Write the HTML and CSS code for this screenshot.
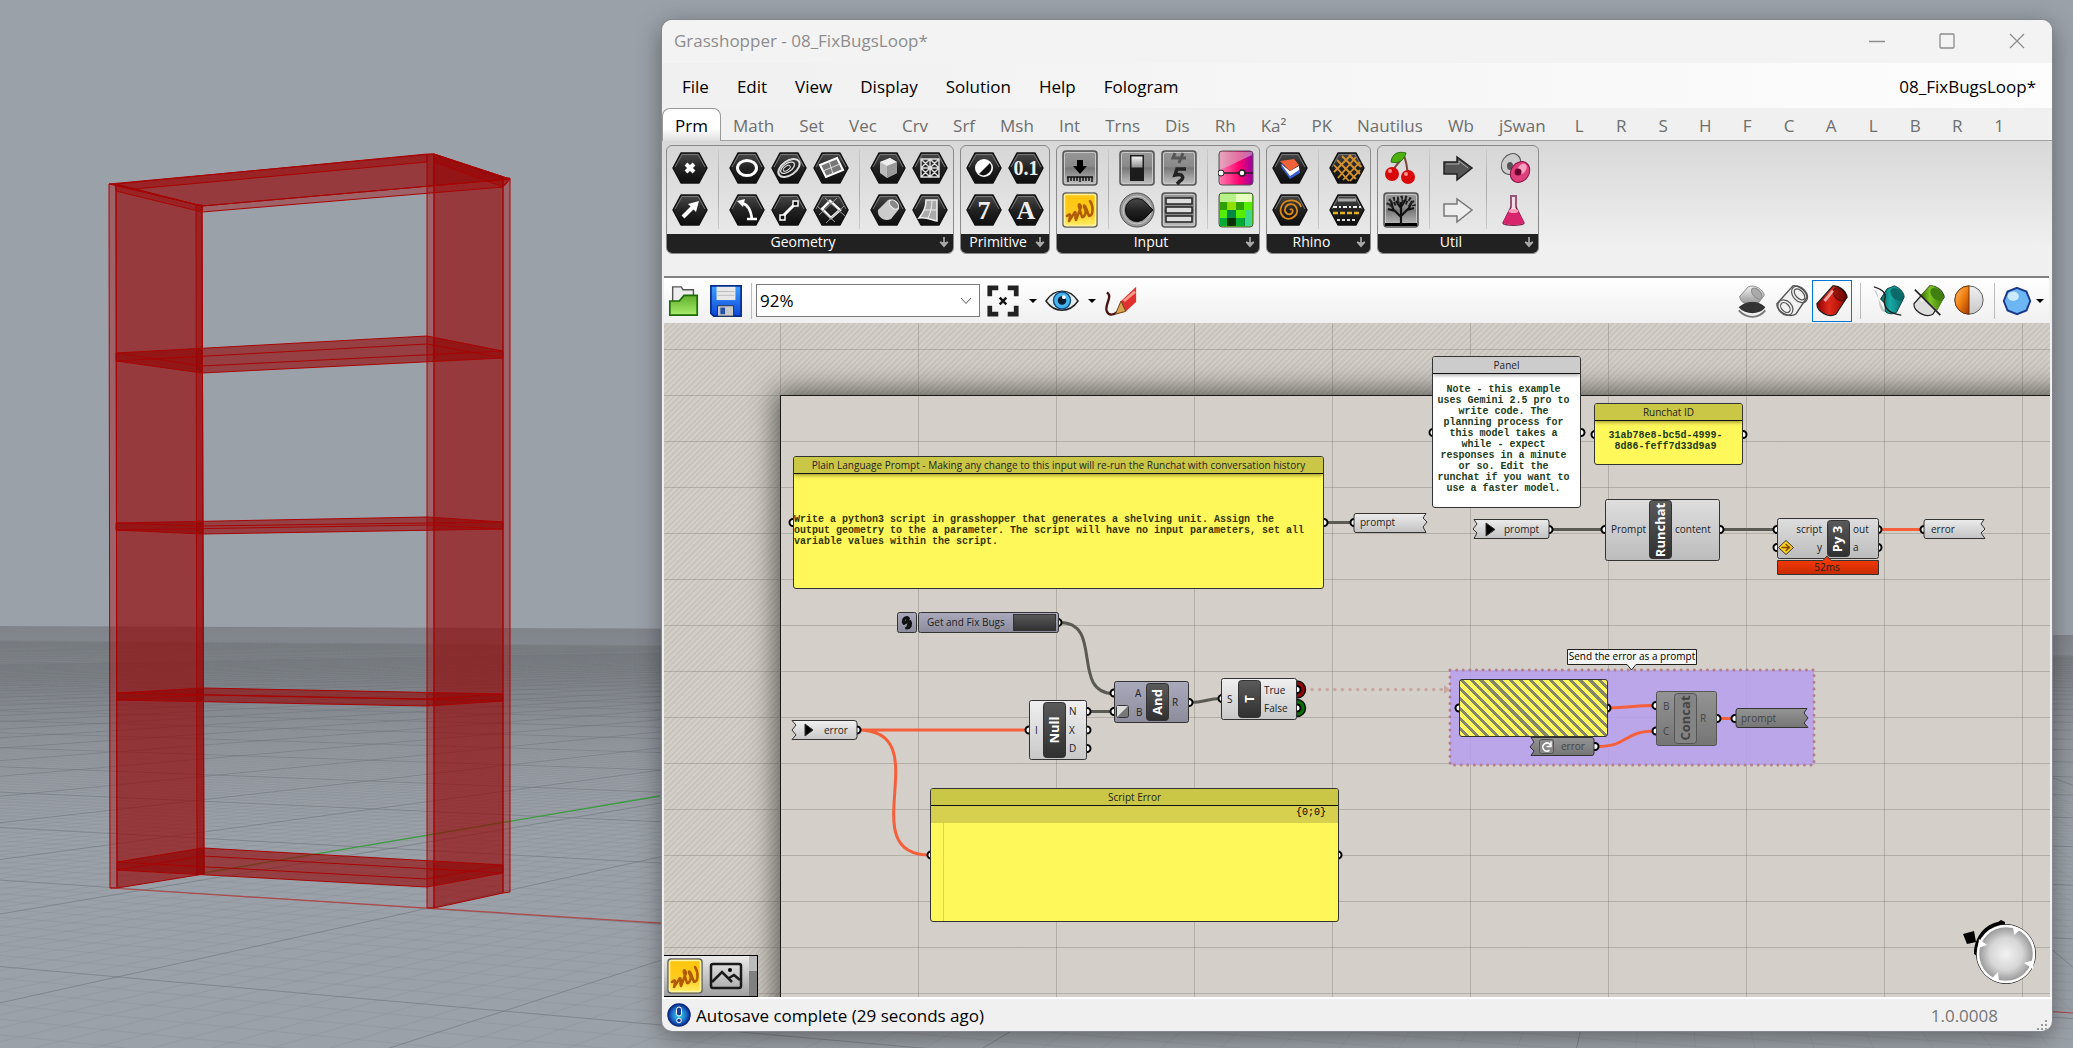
FILE: index.html
```html
<!DOCTYPE html>
<html lang="en">
<head>
<meta charset="utf-8">
<title>Grasshopper - 08_FixBugsLoop*</title>
<link rel="stylesheet" href="styles.css">
</head>
<body>
<div class="desktop">
<svg class="viewport" aria-hidden="true">
  <defs>
    <linearGradient id="ground" x1="0" y1="0" x2="0" y2="1">
      <stop offset="0" stop-color="#7f838a"/><stop offset=".08" stop-color="#868b92"/><stop offset=".25" stop-color="#959aa2"/><stop offset=".5" stop-color="#9ba1a9"/><stop offset="1" stop-color="#9ba1a8"/>
    </linearGradient>
    <clipPath id="groundClip"><polygon points="0,627 4000,643 4000,3000 0,3000"/></clipPath>
  </defs>
  <polygon points="0,626 4000,642 4000,1048 0,1048" fill="url(#ground)"/>
  <g id="grid" clip-path="url(#groundClip)"></g>
  <path d="M203 873L660 796" stroke="#3f9b45" stroke-width="1.3" fill="none"/>
  <path d="M110 888L2073 1013" stroke="#b04848" stroke-width="1.2" fill="none"/>
  <g class="shelf">
    <path class="face" d="M116 184L202 206L204 874L117 888Z"/>
    <path class="face" d="M434 154L503 178L503 893L434 908Z"/>
    <path class="post" d="M109 184H116L117 888H110Z"/>
    <path class="post" d="M196 205H202L204 873L197 875Z"/>
    <path class="post" d="M427 154H434V908H427Z"/>
    <path class="post" d="M503 178H510V892L503 893Z"/>
    <path class="face" d="M109 184L434 154L510 179L202 206Z"/>
    <path class="post" d="M116 185L202 206V212L116 191Z M202 206L510 179L503 187L202 212Z M116 184L427 154V162L135 189"/>
    <path class="post" d="M434 154L510 179L503 187L434 162Z"/>
    <path class="board" d="M116 353L427 336L503 351V358L202 373L116 361Z"/>
    <path class="line" d="M116 353L202 366L503 351M116 361L427 344L503 358M202 348V373"/>
    <path class="board" d="M116 523L427 517L503 522V529L202 534L116 530Z"/>
    <path class="line" d="M116 523L202 526L503 522M116 530L427 525L503 529"/>
    <path class="board" d="M117 693L203 688L503 694V701L427 706L117 700Z"/>
    <path class="line" d="M117 693L427 699L503 694M117 700L203 695L503 701"/>
    <path class="board" d="M117 862L203 848L503 865V873L427 887L117 870Z"/>
    <path class="line" d="M117 862L427 879L503 865M117 870L203 856L503 873"/>
  </g>
</svg>

<svg class="defs" width="0" height="0" aria-hidden="true">
  <defs>
    <linearGradient id="dark" x1="0" y1="0" x2="0" y2="1"><stop offset="0" stop-color="#4a4a4a"/><stop offset=".5" stop-color="#222"/><stop offset="1" stop-color="#0e0e0e"/></linearGradient>
    <linearGradient id="tile" x1="0" y1="0" x2="0" y2="1"><stop offset="0" stop-color="#989898"/><stop offset=".45" stop-color="#8a8a8a"/><stop offset=".5" stop-color="#777"/><stop offset="1" stop-color="#c4c4c4"/></linearGradient>
    <linearGradient id="metal" x1="0" y1="0" x2="0" y2="1"><stop offset="0" stop-color="#f4f4f4"/><stop offset="1" stop-color="#8f8f8f"/></linearGradient>
    <linearGradient id="yellow" x1="0" y1="0" x2="0" y2="1"><stop offset="0" stop-color="#ffc40c"/><stop offset=".6" stop-color="#ffcb20"/><stop offset="1" stop-color="#fff06a"/></linearGradient>
    <linearGradient id="pink" x1="0" y1="0" x2="1" y2="0"><stop offset="0" stop-color="#ff7fae"/><stop offset=".6" stop-color="#ff0070"/><stop offset="1" stop-color="#9a00a0"/></linearGradient>
    <linearGradient id="blue" x1="0" y1="0" x2="0" y2="1"><stop offset="0" stop-color="#3ea0ff"/><stop offset="1" stop-color="#0a46d8"/></linearGradient>
    <linearGradient id="green" x1="0" y1="0" x2="0" y2="1"><stop offset="0" stop-color="#5fae2a"/><stop offset="1" stop-color="#a8ee6c"/></linearGradient>
    <linearGradient id="red" x1="0" y1="0" x2="1" y2="0"><stop offset="0" stop-color="#8e0000"/><stop offset=".4" stop-color="#e02a1c"/><stop offset="1" stop-color="#9c0500"/></linearGradient>
    <linearGradient id="teal" x1="0" y1="0" x2="1" y2="0"><stop offset="0" stop-color="#0a5a5a"/><stop offset=".4" stop-color="#18aaa6"/><stop offset="1" stop-color="#086a6a"/></linearGradient>
    <linearGradient id="lime" x1="0" y1="0" x2="1" y2="0"><stop offset="0" stop-color="#356a06"/><stop offset=".4" stop-color="#7cc424"/><stop offset="1" stop-color="#3a7808"/></linearGradient>
    <linearGradient id="orange" x1="0" y1="0" x2="1" y2="1"><stop offset="0" stop-color="#ffc070"/><stop offset=".5" stop-color="#f08010"/><stop offset="1" stop-color="#a03800"/></linearGradient>
    <linearGradient id="comp" x1="0" y1="0" x2="0" y2="1"><stop offset="0" stop-color="#dedede"/><stop offset="1" stop-color="#bcbcbc"/></linearGradient>
    <linearGradient id="param" x1="0" y1="0" x2="0" y2="1"><stop offset="0" stop-color="#ececec"/><stop offset="1" stop-color="#c2c2c2"/></linearGradient>
    <linearGradient id="light" x1="0" y1="0" x2="0" y2="1"><stop offset="0" stop-color="#f0f0f0"/><stop offset="1" stop-color="#c8c8c8"/></linearGradient>
    <linearGradient id="violet" x1="0" y1="0" x2="0" y2="1"><stop offset="0" stop-color="#aaaabd"/><stop offset="1" stop-color="#8c8c9c"/></linearGradient>
    <linearGradient id="off" x1="0" y1="0" x2="0" y2="1"><stop offset="0" stop-color="#949494"/><stop offset="1" stop-color="#757575"/></linearGradient>
    <linearGradient id="capsule" x1="0" y1="0" x2="0" y2="1"><stop offset="0" stop-color="#5a5a5a"/><stop offset="1" stop-color="#303030"/></linearGradient>
    <linearGradient id="time" x1="0" y1="0" x2="0" y2="1"><stop offset="0" stop-color="#ff3d08"/><stop offset="1" stop-color="#c62a02"/></linearGradient>
    <radialGradient id="ball"><stop offset="0" stop-color="#f2f2f2"/><stop offset=".55" stop-color="#d6d6d6"/><stop offset="1" stop-color="#8c8c8c"/></radialGradient>
    <radialGradient id="status"><stop offset="0" stop-color="#40e0f0"/><stop offset=".65" stop-color="#1c70c8"/><stop offset="1" stop-color="#0a2a90"/></radialGradient>
    <symbol id="hex" viewBox="0 0 36 36"><path d="M1 18L9 3H27L35 18L27 33H9Z" fill="url(#dark)" stroke="#111" stroke-width="1.5" stroke-linejoin="round"/><path d="M3 17L10 4.500H26L33 17" fill="none" stroke="#777" stroke-width="1"/></symbol>
    <symbol id="square" viewBox="0 0 36 36"><rect x="1" y="1" width="34" height="34" rx="3" fill="url(#tile)" stroke="#555" stroke-width="1.500"/><rect x="2.500" y="2.500" width="31" height="31" rx="2" fill="none" stroke="#c8c8c8"/></symbol>
    <symbol id="scribble" viewBox="0 0 36 36"><rect x="1" y="1" width="34" height="34" rx="3" fill="url(#yellow)" stroke="#666" stroke-width="1.500"/><rect x="2.500" y="2.500" width="31" height="31" rx="2" fill="none" stroke="#fff3a0" stroke-width="1.500"/><path d="M5 24C8 21 9 22 7 29L13 20C15 21 12 25 14 28L19 15C18 11 16 12 17 15L20 25C22 26 25 20 23 17C21 13 22 12 24 16L27 24C31 24 32 15 28 9" fill="none" stroke="#b05c00" stroke-width="2.500" stroke-linejoin="round" stroke-linecap="round"/></symbol>
    <symbol id="tube" viewBox="0 0 36 36"><path d="M19 2C25 1 33 7 34 14L22 32C15 36 2 30 2 21Z" stroke="#222" stroke-width="1.300"/><ellipse cx="26" cy="11" rx="5.500" ry="8" transform="rotate(-43 26 11)" fill="#0004" stroke="#0007"/><path d="M10 18L19 7" stroke="#fff9" stroke-width="3"/></symbol>
    <symbol id="down" viewBox="0 0 12 14"><path d="M6 1V12M1.500 7L6 12L10.500 7L6 9Z" fill="#aaa" stroke="#aaa" stroke-width="2"/></symbol>
  </defs>
</svg>

<main class="window">
  <header class="titlebar">
    <h1>Grasshopper - 08_FixBugsLoop*</h1>
    <div class="winbtns">
      <button aria-label="Minimize"><svg width="16" height="16"><path d="M0 8.500H16"/></svg></button>
      <button aria-label="Maximize"><svg width="16" height="16"><rect x="1" y="1" width="14" height="14" rx="1"/></svg></button>
      <button aria-label="Close"><svg width="16" height="16"><path d="M1 1L15 15M15 1L1 15"/></svg></button>
    </div>
  </header>
  <nav class="menubar">
    <button>File</button><button>Edit</button><button>View</button><button>Display</button><button>Solution</button><button>Help</button><button>Fologram</button>
    <button class="doc">08_FixBugsLoop*</button>
  </nav>
  <nav class="tabs">
    <button class="active">Prm</button><button>Math</button><button>Set</button><button>Vec</button><button>Crv</button><button>Srf</button><button>Msh</button><button>Int</button><button>Trns</button><button>Dis</button><button>Rh</button><button>Ka²</button><button>PK</button><button>Nautilus</button><button>Wb</button><button>jSwan</button><button>L</button><button>R</button><button>S</button><button>H</button><button>F</button><button>C</button><button>A</button><button>L</button><button>B</button><button>R</button><button>1</button>
  </nav>

  <section class="ribbon">
    <div class="group">
      <div class="cols">
        <div class="icons c1">
          <button aria-label="Point"><svg viewBox="0 0 36 36"><use href="#hex"/><path d="M14 14L22 22M22 14L14 22" stroke="#fff" stroke-width="4"/></svg></button>
          <button aria-label="Vector"><svg viewBox="0 0 36 36"><use href="#hex"/><path d="M11 25L22 14" stroke="#fff" stroke-width="4"/><path d="M16 12L27 9L24 20Z" fill="#fff"/></svg></button>
        </div>
        <div class="icons c3">
          <button aria-label="Circle"><svg viewBox="0 0 36 36"><use href="#hex"/><ellipse cx="18" cy="18" rx="9.500" ry="7.500" fill="none" stroke="#fff" stroke-width="3"/></svg></button>
          <button aria-label="Curve"><svg viewBox="0 0 36 36"><use href="#hex"/><g transform="rotate(-35 18 18)" fill="none" stroke="#ddd"><ellipse cx="18" cy="18" rx="12" ry="7" stroke-width="2"/><ellipse cx="17" cy="17" rx="8" ry="4" stroke-width="1.300"/><ellipse cx="16" cy="17" rx="4" ry="2"/></g></svg></button>
          <button aria-label="Plane"><svg viewBox="0 0 36 36"><use href="#hex"/><path d="M7 15L24 8L30 20L13 27Z" fill="#777" stroke="#fff" stroke-width="2"/><path d="M10 21L27 14M16 11L20 24" stroke="#ddd"/></svg></button>
          <button aria-label="Arc"><svg viewBox="0 0 36 36"><use href="#hex"/><path d="M13 11C20 13 22 19 23 27M18 27H28" fill="none" stroke="#fff" stroke-width="2.500"/><path d="M8 9L16 7L14 15Z" fill="#fff"/></svg></button>
          <button aria-label="Line"><svg viewBox="0 0 36 36"><use href="#hex"/><path d="M12 24L24 12" stroke="#fff" stroke-width="3"/><path d="M9 23h5v5h-5zM22 9h5v5h-5z" fill="#111" stroke="#fff" stroke-width="1.500"/></svg></button>
          <button aria-label="Rectangle"><svg viewBox="0 0 36 36"><use href="#hex"/><path d="M17 9L27 18L18 26L9 17Z" fill="none" stroke="#fff" stroke-width="2.500"/><path d="M12 6L32 24M24 6L6 23M4 14L22 30M31 14L13 31" stroke="#999"/></svg></button>
        </div>
        <div class="icons c2">
          <button aria-label="Box"><svg viewBox="0 0 36 36"><use href="#hex"/><path d="M10 12L20 8L27 12V23L17 28L10 23Z" fill="#bbb"/><path d="M10 12L20 8L27 12L17 16Z" fill="#eee"/><path d="M17 16V28L27 23V12Z" fill="#999"/></svg></button>
          <button aria-label="Mesh"><svg viewBox="0 0 36 36"><use href="#hex"/><path d="M9 9H27V27H9ZM9 18H27M18 9V27M9 9L27 27M27 9L9 27M18 9L27 18L18 27L9 18Z" fill="none" stroke="#ddd" stroke-width="1.400"/></svg></button>
          <button aria-label="Brep"><svg viewBox="0 0 36 36"><use href="#hex"/><path d="M18 8C24 6 30 11 29 17L21 27C14 30 7 25 8 18Z" fill="#ccc"/><ellipse cx="24" cy="12.500" rx="3.500" ry="5.500" transform="rotate(-45 24 12.500)" fill="#888" stroke="#eee"/></svg></button>
          <button aria-label="Surface"><svg viewBox="0 0 36 36"><use href="#hex"/><path d="M14 8H25V29C19 28 16 25 7 26C12 20 14 15 14 8Z" fill="#aaa" stroke="#eee" stroke-width="1.500"/><path d="M20 8C20 16 18 22 16 26M12 18H25" stroke="#eee" fill="none"/></svg></button>
        </div>
      </div>
      <h2><span>Geometry</span><svg><use href="#down"/></svg></h2>
    </div>
    <div class="group">
      <div class="cols">
        <div class="icons c2">
          <button aria-label="Boolean"><svg viewBox="0 0 36 36"><use href="#hex"/><circle cx="18" cy="18" r="9" fill="#fff"/><path d="M24 13A8 8 0 0 1 13 24Z" fill="#111"/></svg></button>
          <button aria-label="Number"><svg viewBox="0 0 36 36"><use href="#hex"/><text x="18" y="25" class="glyph small">0.1</text></svg></button>
          <button aria-label="Integer"><svg viewBox="0 0 36 36"><use href="#hex"/><text x="18" y="27" class="glyph">7</text></svg></button>
          <button aria-label="Text"><svg viewBox="0 0 36 36"><use href="#hex"/><text x="18" y="27" class="glyph">A</text></svg></button>
        </div>
      </div>
      <h2><span>Primitive</span><svg><use href="#down"/></svg></h2>
    </div>
    <div class="group">
      <div class="cols">
        <div class="icons c1">
          <button aria-label="Button"><svg viewBox="0 0 36 36"><use href="#square"/><path d="M15 10H21V16H25L18 24L11 16H15Z"/><path d="M5 27H31M6 27V32M9 27V31M12 27V31M15 27V31M18 27V32M21 27V31M24 27V31M27 27V31M30 27V32" stroke="#111" stroke-width="1.500"/></svg></button>
          <button aria-label="Panel"><svg viewBox="0 0 36 36"><use href="#scribble"/></svg></button>
        </div>
        <div class="icons c2">
          <button aria-label="Toggle"><svg viewBox="0 0 36 36"><use href="#square"/><rect x="11" y="5" width="14" height="26" fill="#1c1c1c"/><rect x="12.500" y="6.500" width="11" height="11" fill="url(#metal)"/></svg></button>
          <button aria-label="Digit scroller"><svg viewBox="0 0 36 36"><use href="#square"/><path d="M14 3L12 8H25M22 3L18 13" stroke="#555" stroke-width="3" fill="none"/><path d="M25 19H16L14 25C22 23 24 28 19 31L16 34" stroke="#222" stroke-width="3.500" fill="none"/></svg></button>
          <button aria-label="Knob"><svg viewBox="0 0 36 36"><circle cx="18" cy="18" r="17" fill="#999" stroke="#555"/><circle cx="18" cy="18" r="14" fill="none" stroke="#ccc"/><path d="M27 11A11.500 11.500 0 1 0 27 25L34 18Z" fill="url(#dark)" stroke="#111"/></svg></button>
          <button aria-label="Value list"><svg viewBox="0 0 36 36"><use href="#square"/><path d="M5 6H31V12H5ZM5 15H31V21H5ZM5 24H31V30H5Z" fill="#ddd" stroke="#222" stroke-width="1.500"/></svg></button>
        </div>
        <div class="icons c1">
          <button aria-label="Gradient"><svg viewBox="0 0 36 36"><rect x="1" y="1" width="34" height="34" rx="3" fill="url(#pink)" stroke="#555"/><path d="M2 2H34V5L2 20Z" fill="#ccc8"/><path d="M1 23H35" stroke="#222" stroke-width="1.500"/><circle cx="3" cy="23" r="3" fill="#fff" stroke="#222"/><circle cx="24" cy="23" r="3" fill="#fff" stroke="#222" stroke-width="1.500"/></svg></button>
          <button aria-label="Image sampler"><svg viewBox="0 0 36 36"><rect x="1" y="1" width="34" height="34" rx="3" fill="#5e0" stroke="#555"/><path d="M2 2H34V10H2Z" fill="#b8f08a"/><path d="M18 2H34V10H18Z" fill="#e6ffc0"/><path d="M2 10H9V18H2ZM18 10H26V18H18Z" fill="#30a000"/><path d="M9 18H18V26H9ZM26 26H34V34H26Z" fill="#084"/><path d="M9 26H18V34H9Z" fill="#030"/><path d="M2 26H9V34H2ZM18 26H26V34H18Z" fill="#0a3"/><path d="M27 18H34V34H27Z" fill="#3ed88a"/><path d="M10 10H18V18H10Z" fill="#90e000"/></svg></button>
        </div>
      </div>
      <h2><span>Input</span><svg><use href="#down"/></svg></h2>
    </div>
    <div class="group">
      <div class="cols">
        <div class="icons c1">
          <button aria-label="Layers"><svg viewBox="0 0 36 36"><use href="#hex"/><path d="M9 17L18 29L28 23V18L18 24L10 13Z" fill="#3a5fd0"/><path d="M9 14L18 26L27 20V16L18 21Z" fill="#fff"/><path d="M8 11L22 9L27 15L18 21Z" fill="#f0623c"/></svg></button>
          <button aria-label="Material"><svg viewBox="0 0 36 36"><use href="#hex"/><path d="M18 18C19 16 22 18 20 21C17 24 12 21 13 17C14 12 21 10 24 15C28 22 20 29 13 26C5 21 9 11 15 9C22 7 28 10 29 15" fill="none" stroke="#d98a1c" stroke-width="1.800"/></svg></button>
        </div>
        <div class="icons c1">
          <button aria-label="Hatch"><svg viewBox="0 0 36 36"><use href="#hex"/><path d="M8 10L27 29M13 6L31 24M20 5L32 17M5 15L20 31M27 7L9 28M22 5L5 22M31 12L14 30M31 20L21 31" stroke="#d8942c" stroke-width="1.800"/></svg></button>
          <button aria-label="Linetype"><svg viewBox="0 0 36 36"><use href="#hex"/><path d="M9 8H27" stroke="#aaa" stroke-width="3"/><path d="M4 15H32" stroke="#eee" stroke-width="2" stroke-dasharray="4 2 2 2"/><path d="M4 21H32" stroke="#e0b020" stroke-width="2.500" stroke-dasharray="5 2"/><path d="M8 28H28" stroke="#ddd" stroke-width="2" stroke-dasharray="3 2"/></svg></button>
        </div>
      </div>
      <h2><span>Rhino</span><svg><use href="#down"/></svg></h2>
    </div>
    <div class="group">
      <div class="cols">
        <div class="icons c1">
          <button aria-label="Cherry picker"><svg viewBox="0 0 36 36"><path d="M21 6C17 12 11 16 9 23M21 6C24 13 24 19 25 25" stroke="#7a4a3a" stroke-width="2" fill="none"/><path d="M8 12C9 3 16 1 23 3C21 11 15 14 8 12Z" fill="#4cb010" stroke="#2c7008"/><circle cx="9" cy="24" r="7" fill="#d80808"/><circle cx="25" cy="27" r="7" fill="#d80808"/><circle cx="7" cy="21" r="2" fill="#ff9090"/><circle cx="23" cy="24" r="2" fill="#ff9090"/></svg></button>
          <button aria-label="Data tree"><svg viewBox="0 0 36 36"><use href="#square"/><path d="M2 31H34V34H2Z"/><path d="M18 33V22M18 25L10 17M18 24L26 16M18 22V10M12 19L5 17M24 18L31 16M18 16L13 9M18 15L23 7M10 17L8 9M26 16L29 9" stroke="#111" stroke-width="2.200" fill="none"/><path d="M5 13C8 4 14 8 18 6C24 4 30 8 31 14M8 15C12 9 24 8 28 14" stroke="#222" stroke-width="4" stroke-dasharray="2 2" fill="none"/></svg></button>
        </div>
        <div class="icons c1">
          <button aria-label="Data input"><svg viewBox="0 0 36 36"><path d="M4 12H17V7L32 18L17 30V24H4Z" fill="#555" stroke="#222" stroke-width="1.500"/><path d="M6 14H19V11L28 18" stroke="#aaa" fill="none"/></svg></button>
          <button aria-label="Data output"><svg viewBox="0 0 36 36"><path d="M4 12H17V7L32 18L17 30V24H4Z" fill="#eee" stroke="#777" stroke-width="1.500"/></svg></button>
        </div>
        <div class="icons c1">
          <button aria-label="Cluster"><svg viewBox="0 0 36 36"><ellipse cx="14" cy="14" rx="9" ry="11" transform="rotate(35 14 14)" fill="#ccc" stroke="#555"/><ellipse cx="13" cy="16" rx="3" ry="4" fill="#555"/><ellipse cx="23" cy="22" rx="9" ry="11" transform="rotate(35 23 22)" fill="#e0407c" stroke="#8a1048"/><ellipse cx="25" cy="19" rx="4" ry="6" transform="rotate(35 25 19)" fill="#f8a0c0"/><circle cx="21" cy="22" r="3.500" fill="#6a0030"/></svg></button>
          <button aria-label="Galapagos"><svg viewBox="0 0 36 36"><path d="M13 4H20M14 5V15L6 31C7 34 26 34 27 31L19 15V5" fill="#f4dce6" stroke="#7a2850" stroke-width="1.500"/><path d="M12 19H21L27 30C26 34 7 34 6 30Z" fill="#d8246c"/><ellipse cx="16.500" cy="19" rx="5" ry="2" fill="#ff9ab8"/></svg></button>
        </div>
      </div>
      <h2><span>Util</span><svg><use href="#down"/></svg></h2>
    </div>
  </section>

  <section class="toolbar">
    <button class="tool" aria-label="Open"><svg viewBox="0 0 36 36"><path d="M6 20V3H15L17 6H28V20Z" fill="#eee" stroke="#555" stroke-width="1.500"/><path d="M3 33V18H13L18 12H32V33Z" fill="url(#green)" stroke="#1c6a08" stroke-width="1.800"/></svg></button>
    <button class="tool save" aria-label="Save"><svg viewBox="0 0 36 36"><path d="M2 2H34V34H5L2 31Z" fill="url(#blue)" stroke="#0a2a8a" stroke-width="1.800"/><path d="M8 3H28V17H8Z" fill="#e8e8e8"/><path d="M9 8H27M9 12H27" stroke="#bbb"/><path d="M9 23H26V34H9Z" fill="#c8c8c8" stroke="#234"/><path d="M12 25H17V32H12Z" fill="#2450a8"/></svg></button>
    <i class="sep"></i>
    <div class="combo"><select aria-label="Zoom"><option>92%</option></select><svg width="12" height="8"><path d="M1 1L6 6.500L11 1" fill="none" stroke="#555"/></svg></div>
    <button class="tool" aria-label="Zoom extents"><svg viewBox="0 0 36 36"><path d="M4 13V4H13M23 4H32V13M32 23V32H23M13 32H4V23" fill="none" stroke="#222" stroke-width="5"/><path d="M14.500 14.500L21.500 21.500M21.500 14.500L14.500 21.500" stroke="#111" stroke-width="2.500"/></svg></button>
    <button class="drop" aria-label="Zoom options"></button>
    <button class="tool" aria-label="Named views"><svg viewBox="0 0 36 36"><path d="M1 18C10 4 26 4 35 18C26 31 10 31 1 18Z" fill="#e4ecee" stroke="#222" stroke-width="1.500"/><circle cx="18" cy="17.500" r="9" fill="#45b4ec" stroke="#104a80" stroke-width="1.500"/><circle cx="18" cy="17.500" r="4.500" fill="#0a1c30"/><circle cx="20" cy="14" r="2" fill="#fff"/></svg></button>
    <button class="drop" aria-label="View options"></button>
    <button class="tool" aria-label="Sketch"><svg viewBox="0 0 36 36"><path d="M3 9C10 13 0 22 3 29C5 34 10 33 15 29" fill="none" stroke="#4a1414" stroke-width="2.500"/><path d="M18 18L34 3V19L23 29Z" fill="#e03030"/><path d="M21 18L33 8" stroke="#ff9a8a" stroke-width="3"/><path d="M18 18L23 29L12 32Z" fill="#d8a450" stroke="#6a3a10"/></svg></button>
    <span class="grow"></span>
    <button class="tool" aria-label="Hide preview"><svg viewBox="0 0 36 36"><path d="M5 13L14 3C21 0 30 6 31 12L24 21C14 24 5 20 5 13Z" fill="url(#metal)" stroke="#888"/><ellipse cx="23" cy="10" rx="4" ry="7" transform="rotate(-43 23 10)" fill="#aaa" stroke="#888"/><path d="M4 25C10 17 27 17 32 25C26 33 11 33 4 25Z" fill="#333"/><path d="M4 28C12 37 25 37 32 28" fill="none" stroke="#777" stroke-width="2"/></svg></button>
    <button class="tool" aria-label="Wireframe preview"><svg viewBox="0 0 36 36"><path d="M19 2C25 1 33 7 34 14L22 32C15 36 2 30 2 21Z" fill="#f2f2f2" stroke="#555" stroke-width="1.500"/><g fill="none" stroke="#555" stroke-width="1.300"><ellipse cx="26" cy="11" rx="7" ry="10" transform="rotate(-43 26 11)"/><ellipse cx="26" cy="11" rx="4" ry="7" transform="rotate(-43 26 11)"/><ellipse cx="11" cy="25" rx="7" ry="9" transform="rotate(-43 11 25)"/><ellipse cx="11" cy="25" rx="4" ry="6" transform="rotate(-43 11 25)"/></g></svg></button>
    <button class="tool selected" aria-label="Shaded preview"><svg viewBox="0 0 36 36"><use href="#tube" fill="url(#red)"/></svg></button>
    <i class="sep"></i>
    <button class="tool" aria-label="Selected preview"><svg viewBox="0 0 36 36"><path d="M2 6C10 8 4 28 14 30Z" fill="#0003"/><path d="M16 5L24 2C31 5 34 10 34 14L26 30C21 33 16 31 14 29V21L9 16Z" fill="url(#teal)" stroke="#053c3c"/><ellipse cx="26" cy="11" rx="5" ry="8" transform="rotate(-43 26 11)" fill="#0a6a6a"/><path d="M2 3C12 6 16 10 13 18C13 24 16 31 31 33" fill="none" stroke="#222" stroke-width="1.500"/></svg></button>
    <button class="tool" aria-label="Document preview"><svg viewBox="0 0 36 36"><use href="#tube" fill="#ddd"/><path d="M9 12L19 2C25 1 33 7 34 14L27 28Z" fill="url(#lime)"/><ellipse cx="26" cy="11" rx="5" ry="8" transform="rotate(-43 26 11)" fill="#3f8010"/><path d="M3 6L30 33" stroke="#222" stroke-width="1.800"/></svg></button>
    <button class="tool" aria-label="Preview settings"><svg viewBox="0 0 36 36"><circle cx="18" cy="17" r="15" fill="url(#light)" stroke="#555"/><path d="M18 2A15 15 0 0 0 18 32Z" fill="url(#orange)" stroke="#703008"/></svg></button>
    <i class="sep tight"></i>
    <button class="tool narrow" aria-label="Mesh quality"><svg viewBox="0 0 36 36"><path d="M18 4L28 8L32 18L28 28L18 32L8 28L4 18L8 8Z" fill="#6cb6f4" stroke="#1c3888" stroke-width="2"/><ellipse cx="14" cy="13" rx="6" ry="5" fill="#cbeaff"/></svg></button>
    <button class="drop" aria-label="Quality options"></button>
  </section>

  <section class="canvas">
    <div class="page"></div>
    <div class="gridlines"></div>
    <svg class="graph">
      <g transform="translate(-664 -323)">
        <rect x="1450" y="670" width="364" height="95" fill="#b79ff0" fill-opacity=".85"/>
        <rect x="1450" y="670" width="364" height="95" fill="none" stroke="#b0808c" stroke-width="3" stroke-linecap="round" stroke-dasharray="0.100 6.500"/>
        <path d="M1312 689.500H1442" stroke="#c8a8a4" stroke-width="3.500" stroke-linecap="round" stroke-dasharray="0.100 7.500"/>
        <path d="M1444 685L1450 689.500L1444 694Z" fill="#c8a8a4"/>
        <g class="wire">
          <path d="M1325 522.500H1353M1550 529.500H1605M1721 529.500H1777M1060 622.500C1104 622.500 1070 693.500 1114 693.500M1089 711.500H1114M1190 702.500C1206 702.500 1206 698.500 1221 698.500"/>
          <path class="hot" d="M1880 529.500H1924M858 730H1028M858 730C940 730 850 855 930 855M1609 708C1630 708 1630 705.500 1656 705.500M1597 746.500C1630 746.500 1622 731 1656 731M1719 718.500H1735"/>
        </g>
        <circle cx="1297" cy="689.500" r="8.500" fill="#900404" stroke="#111" stroke-width="1.500"/>
        <circle cx="1297" cy="708" r="8.500" fill="#067006" stroke="#111" stroke-width="1.500"/>
        <g class="grip">
          <circle cx="793" cy="522.500" r="3.500"/><circle cx="1324" cy="522.500" r="3.500"/><circle cx="1354" cy="522.500" r="3.500"/>
          <circle cx="1433" cy="432.500" r="3.500"/><circle cx="1581" cy="432.500" r="3.500"/><circle cx="1595" cy="434.500" r="3.500"/><circle cx="1743" cy="434.500" r="3.500"/>
          <circle cx="1549" cy="529.500" r="3.500"/><circle cx="1605" cy="529.500" r="3.500"/><circle cx="1720" cy="529.500" r="3.500"/>
          <circle cx="1777" cy="529.500" r="3.500"/><circle cx="1777" cy="547.500" r="3.500"/><circle cx="1878" cy="529.500" r="3.500"/><circle cx="1878" cy="547.500" r="3.500"/><circle cx="1924" cy="529.500" r="3.500"/>
          <circle cx="1058" cy="622.500" r="3.500"/><circle cx="857" cy="730" r="3.500"/>
          <circle cx="1029" cy="730" r="3.500"/><circle cx="1087" cy="711.500" r="3.500"/><circle cx="1087" cy="730" r="3.500"/><circle cx="1087" cy="748.500" r="3.500"/>
          <circle cx="1114" cy="693" r="3.500"/><circle cx="1114" cy="711.500" r="3.500"/><circle cx="1189" cy="702.500" r="3.500"/>
          <circle cx="1222" cy="698.500" r="3.500"/><circle cx="1297" cy="689.500" r="3.500"/><circle cx="1297" cy="708" r="3.500"/>
          <circle cx="931" cy="855" r="3.500"/><circle cx="1338" cy="855" r="3.500"/>
          <circle cx="1459" cy="708" r="3.500"/><circle cx="1607" cy="708" r="3.500"/><circle cx="1595" cy="746.500" r="3.500"/>
          <circle cx="1656" cy="705.500" r="3.500"/><circle cx="1656" cy="731" r="3.500"/><circle cx="1717" cy="718.500" r="3.500"/><circle cx="1735" cy="718.500" r="3.500"/>
        </g>

        <g class="node">
          <path d="M1356 513.500H1426L1423 518L1427 522L1423 527L1426 532.500H1356Q1354 532.500 1354 530V516Q1354 513.500 1356 513.500Z" fill="url(#param)"/>
          <text x="1360" y="526">prompt</text>
          <path d="M1547 519.500H1474L1477 524L1473 529L1477 533L1474 538.500H1547Q1549 538.500 1549 536V522Q1549 519.500 1547 519.500Z" fill="url(#param)"/>
          <path d="M1486 523L1495 529.500L1486 536Z" class="ink"/><text x="1504" y="533">prompt</text>
          <path d="M1926 519.500H1984L1981 524L1985 529L1981 533L1985 538.500H1926Q1924 538.500 1924 536V522Q1924 519.500 1926 519.500Z" fill="url(#param)"/>
          <text x="1931" y="533">error</text>
          <path d="M854 720.500H792L796 725L792 730L796 735L792 739.500H854Q857 739.500 857 737V723Q857 720.500 854 720.500Z" fill="url(#light)"/>
          <path d="M805 724L813 730L805 736Z" class="ink"/><text x="824" y="734">error</text>
        </g>

        <g class="node">
          <rect x="1605.500" y="499.500" width="114" height="61" rx="2" fill="url(#comp)"/>
          <rect x="1649.500" y="500.500" width="22" height="58" rx="3" fill="url(#capsule)"/>
          <text x="1611" y="533">Prompt</text><text x="1675" y="533">content</text>
          <text class="cap" transform="translate(1665 530) rotate(-90)">Runchat</text>

          <rect x="1777.500" y="518.500" width="101" height="40" rx="2" fill="url(#comp)"/>
          <rect x="1827.500" y="520.500" width="22" height="36" rx="3" fill="url(#capsule)"/>
          <text class="end" x="1822" y="533">script</text><text class="end" x="1822" y="551">y</text><text x="1853" y="533">out</text><text x="1853" y="551">a</text>
          <text class="cap" transform="translate(1842 539) rotate(-90)">Py 3</text>
          <path d="M1786 540.500L1793.500 547.500L1786 554.500L1778.500 547.500Z" fill="#ffce20"/><path class="mark brown" d="M1782 547.500H1788M1786 544.500L1789.500 547.500L1786 550.500"/>
          <path d="M1777.500 560.500H1823L1827 556L1831 560.500H1878.500V574.500H1777.500Z" fill="url(#time)"/>
          <text class="mid" x="1827" y="571">52ms</text>
        </g>

        <g class="node">
          <rect x="897.500" y="612.500" width="19" height="20" rx="2" fill="url(#violet)"/>
          <path class="mark bold" d="M907.500 617.500C903.500 617.500 902.500 621 904 623.500M906.500 628C910.500 628 911.500 624 910 621.500M906 622.500L908.500 618.500M908 626.500L909.500 622"/>
          <rect x="918.500" y="612.500" width="140" height="20" rx="2" fill="url(#violet)"/>
          <rect x="1013.500" y="614.500" width="42" height="16" fill="url(#capsule)"/>
          <text x="927" y="626">Get and Fix Bugs</text>

          <rect x="1029.500" y="700.500" width="57" height="59" rx="2" fill="url(#light)"/>
          <rect x="1043.500" y="702.500" width="22" height="55" rx="3" fill="url(#capsule)"/>
          <text x="1035" y="734">I</text><text x="1069" y="715">N</text><text x="1069" y="734">X</text><text x="1069" y="752">D</text>
          <text class="cap" transform="translate(1059 730) rotate(-90)">Null</text>

          <rect x="1114.500" y="681.500" width="74" height="41" rx="2" fill="url(#violet)"/>
          <rect x="1146.500" y="683.500" width="22" height="37" rx="3" fill="url(#capsule)"/>
          <text x="1135" y="697">A</text><text x="1136" y="716">B</text><text x="1172" y="706">R</text>
          <text class="cap" transform="translate(1162 702) rotate(-90)">And</text>
          <rect x="1116.500" y="705.500" width="12" height="12" rx="2" fill="#777"/><path class="flat" d="M1117 717L1128 706H1117Z" fill="#ddd"/>

          <rect x="1221.500" y="678.500" width="75" height="41" rx="2" fill="url(#light)"/>
          <rect x="1238.500" y="680.500" width="22" height="37" rx="3" fill="url(#capsule)"/>
          <text x="1227" y="703">S</text><text x="1264" y="694">True</text><text x="1264" y="712">False</text>
          <text class="cap" transform="translate(1254 699) rotate(-90)">T</text>
        </g>

        <g class="node off">
          <path d="M1592 737.500H1531L1534 742L1530 747L1534 751L1531 755.500H1592Q1594 755.500 1594 753V740Q1594 737.500 1592 737.500Z" fill="url(#off)"/>
          <rect x="1539.500" y="739.500" width="14" height="14" rx="2" fill="#888"/><path class="mark white" d="M1549 750.500A4 4 0 1 1 1550 744.500M1551 742V746.500H1547"/>
          <text x="1561" y="750">error</text>
          <rect x="1656.500" y="691.500" width="60" height="54" rx="2" fill="url(#off)"/>
          <rect x="1674.500" y="693.500" width="22" height="50" rx="3" fill="#848484"/>
          <text x="1663" y="710">B</text><text x="1663" y="735">C</text><text x="1700" y="722">R</text>
          <text class="cap" transform="translate(1690 718) rotate(-90)">Concat</text>
          <path d="M1738 708.500H1807L1804 713L1808 718L1804 723L1808 727.500H1738Q1736 727.500 1736 725V711Q1736 708.500 1738 708.500Z" fill="url(#off)"/>
          <text x="1741" y="722">prompt</text>
        </g>
        <path d="M1567.500 649.500H1696.500V664.500H1636L1631.500 670L1627 664.500H1567.500Z" fill="#f4f4f4" stroke="#222"/>
        <text class="label" x="1632" y="660">Send the error as a prompt</text>
      </g>
    </svg>

    <article class="panel prompt-panel"><h3>Plain Language Prompt - Making any change to this input will re-run the Runchat with conversation history</h3><p>Write a python3 script in grasshopper that generates a shelving unit. Assign the output geometry to the a parameter. The script will have no input parameters, set all variable values within the script.</p></article>
    <article class="panel note-panel"><h3>Panel</h3><p>Note - this example uses Gemini 2.5 pro to write code. The planning process for this model takes a while - expect responses in a minute or so. Edit the runchat if you want to use a faster model.</p></article>
    <article class="panel id-panel"><h3>Runchat ID</h3><p>31ab78e8-bc5d-4999-8d86-feff7d33d9a9</p></article>
    <article class="panel error-panel"><h3>Script Error</h3><div class="path">{0;0}</div><div class="rows"></div></article>
    <div class="panel hatch-panel"></div>

    <div class="palette">
      <button aria-label="Panel"><svg viewBox="0 0 36 36"><use href="#scribble"/></svg></button>
      <button aria-label="Image"><svg viewBox="0 0 36 36"><rect x="3" y="6" width="30" height="24" rx="2" fill="none" stroke="#1a1a1a" stroke-width="2.500"/><path d="M4 24L14 14L24 24M21 20L26 17L32 22" fill="none" stroke="#1a1a1a" stroke-width="2.500"/><circle cx="22" cy="12" r="2"/></svg></button>
    </div>
    <svg class="compass" viewBox="0 0 76 66"><path d="M1 14L12 11L14 22L5 24ZM12 34C12 16 24 4 36 2L39 0L43 2V8L28 14L15 36Z"/><circle cx="44" cy="34" r="29.500" fill="url(#ball)" stroke="#222"/><circle cx="44" cy="34" r="28" fill="none" stroke="#fff" stroke-width="2.500"/><path d="M51 6L59 9L52 15ZM17 19L25 25L16 28ZM71 49L62 43L72 40ZM37 62L29 59L36 52Z" fill="#fff"/></svg>
  </section>

  <footer class="statusbar">
    <svg width="24" height="24" viewBox="0 0 24 24"><circle cx="12" cy="12" r="11" fill="url(#status)" stroke="#0a2a80" stroke-width="1.500"/><rect x="9.500" y="4" width="5" height="9" rx="2.500" fill="#1a3a90" stroke="#fff"/><circle cx="12" cy="17.500" r="2.300" fill="#1a3a90" stroke="#fff"/></svg>
    <span>Autosave complete (29 seconds ago)</span>
    <span class="version">1.0.0008</span>
    <svg width="12" height="12"><path d="M8 1h2v2h-2zM8 5h2v2h-2zM4 5h2v2h-2zM8 9h2v2h-2zM4 9h2v2h-2zM0 9h2v2h-2z" fill="#999"/></svg>
  </footer>
</main>
</div>
<script src="grid.js"></script>
</body>
</html>
```
FILE: styles.css
```css
* { box-sizing: border-box; }
body { margin: 0; font-family: "Open Sans", sans-serif; font-size: 17px; color: #000; }
button, select { font: inherit; color: inherit; border: 0; background: none; padding: 0; margin: 0; }
h1, h2, h3, p { margin: 0; font-weight: 400; font-size: inherit; }

.desktop { position: relative; height: 100vh; overflow: hidden; background: #9ba1a9; }
.viewport { position: absolute; inset: 0; width: 100%; height: 100%; }
.defs { position: absolute; }
.minor { stroke: #7e838a; stroke-opacity: .22; }
.major { stroke: #70757c; stroke-opacity: .6; }
.shelf path { stroke: #a80404; stroke-width: 1; }
.shelf .face { fill: rgba(147, 0, 0, .64); }
.shelf .post { fill: rgba(160, 0, 0, .38); }
.shelf .board { fill: rgba(147, 0, 0, .6); }
.shelf .line { fill: none; }

.window { position: absolute; inset: 20px 21px 17px 662px; display: flex; flex-direction: column; background: #f0f0f0; border-radius: 10px; overflow: hidden; box-shadow: 0 0 0 1px #84888e, 0 6px 26px rgba(0, 0, 0, .4); }
.titlebar { display: flex; align-items: center; height: 43px; flex: none; padding: 0 0 2px 12px; background: #f3f3f3; color: #8d8d8d; }
.winbtns { display: flex; margin-left: auto; }
.winbtns button { width: 70px; height: 41px; }
.winbtns svg { display: block; margin: auto; fill: none; stroke: #8d8d8d; stroke-width: 1.3; }
.menubar { display: flex; align-items: center; height: 45px; flex: none; padding: 2px 2px 0 6px; background: linear-gradient(90deg, #f0f0f0, #fdfdfd); }
.menubar button { padding: 0 14px; }
.menubar .doc { margin-left: auto; }

.tabs { display: flex; height: 33px; flex: none; color: #6e6e6e; border-bottom: 1px solid #a0a0a0; }
.tabs button { padding: 2px 13px 0 12px; min-width: 42px; height: 33px; }
.tabs .active { padding: 0 12px; height: 34px; color: #000; background: linear-gradient(#fff 60%, #dcdcdc); border: 1px solid #999; border-bottom: 0; border-radius: 8px 8px 0 0; }

.ribbon { display: flex; gap: 6px; height: 135px; flex: none; padding: 4px 4px 22px; background: linear-gradient(#d8d8d8, #f0f0f0 80%); }
.group { display: flex; flex-direction: column; border-radius: 6px; overflow: hidden; border: 1px solid #8a8a8a; background: linear-gradient(#d6d6d6, #ececec); }
.cols { display: flex; gap: 15px; padding: 1px 2px 3px; }
.icons { display: grid; position: relative; }
.c1 { grid-template-columns: 42px; }
.c2 { grid-template-columns: 42px 42px; }
.c3 { grid-template-columns: 42px 42px 42px; }
.icons + .icons::before { content: ""; position: absolute; left: -8px; top: 2px; bottom: 2px; width: 1px; background: linear-gradient(#ccc, #aaa, #ccc); }
.icons button { height: 42px; display: grid; place-items: center; }
.icons svg { width: 36px; height: 36px; }
.glyph { font: bold 26px "Liberation Serif", serif; fill: #eee; text-anchor: middle; }
.glyph.small { font-size: 20px; }
.group h2 { display: flex; align-items: center; flex: 1; padding-bottom: 3px; background: #212121; color: #fff; font-size: 14px; line-height: 16px; }
.group h2 span { flex: 1; text-align: center; }
.group h2 svg { width: 10px; height: 12px; margin-right: 4px; }

.toolbar { display: flex; align-items: center; height: 47px; flex: none; margin: 0 3px 0 2px; border-top: 2px solid #828282; background: linear-gradient(#fff, #f0f0f0); }
.tool { width: 40px; height: 42px; display: grid; place-items: center; flex: none; }
.tool svg { width: 34px; height: 34px; }
.save { margin-left: 2px; }
.selected { border: 1px solid #0078d7; }
.narrow { width: 30px; }
.sep { width: 1px; height: 36px; margin: 0 8px; background: #bbb; flex: none; }
.tight { margin: 0 5px; }
.toolbar .save + .sep { margin: 0 4px 0 5px; }
.combo { display: flex; align-items: center; position: relative; width: 224px; height: 33px; border: 1px solid #7a7a7a; background: #fff; margin-right: 3px; }
.combo select { appearance: none; width: 100%; height: 100%; padding-left: 3px; }
.combo svg { position: absolute; right: 7px; }
.drop { width: 19px; height: 20px; flex: none; display: grid; place-items: center; }
.drop::before { content: ""; border: 4px solid transparent; border-top-color: #000; border-bottom: 0; }
.grow { flex: 1; }

.canvas { position: relative; flex: 1; min-height: 0; margin: 0 2px; overflow: hidden; background: repeating-linear-gradient(135deg, #d3cec7 0 2px, #c9c5bd 2px 4px); }
.page { position: absolute; inset: 72px -60px -60px 116px; border: 1px solid #000; background: #d4cfc8; box-shadow: 0 0 26px 4px rgba(30, 30, 25, .7); }
.gridlines { position: absolute; inset: -20px 0 0 -22px; background: repeating-linear-gradient(90deg, rgba(90, 90, 80, .27) 0 1px, transparent 1px 138px), repeating-linear-gradient(rgba(90, 90, 80, .27) 0 1px, transparent 1px 46px); }
.graph { position: absolute; inset: 0; width: 100%; height: 100%; font-size: 10px; }
.wire path { fill: none; stroke: #5a5a52; stroke-width: 3; }
.wire .hot { stroke: #f5603a; }
.grip circle { fill: #fff; stroke: #000; stroke-width: 2; }
.node rect, .node path { stroke: #333; stroke-width: 1; }
.node text { fill: #222; }
.node .ink { fill: #000; }
.node .flat { stroke: none; }
.node .mark { fill: none; stroke-width: 1.5; stroke-linecap: round; }
.node .bold { stroke: #111; stroke-width: 3; }
.node .brown { stroke: #7a4a00; }
.node .white { stroke: #fff; }
.node .cap { font-weight: 700; font-size: 13px; fill: #fff; text-anchor: middle; }
.node .end { text-anchor: end; }
.node .mid, .label { text-anchor: middle; }
.off rect { stroke: #555; }
.off text, .off .cap { fill: #444; }

.panel { position: absolute; display: flex; flex-direction: column; border: 1px solid #333; border-radius: 3px; background: #fff85a; overflow: hidden; font-size: 10px; }
.panel h3 { height: 17px; flex: none; line-height: 16px; text-align: center; color: #222; background: #cbc746; border-bottom: 1px solid #111; box-shadow: 0 1px 4px rgba(60, 60, 0, .6); white-space: nowrap; }
.panel p { margin: auto 0; font: bold 10px/11px "Liberation Mono", monospace; color: #1c3c1c; }
.prompt-panel { left: 129px; top: 133px; width: 531px; height: 133px; }
.prompt-panel p { padding: 0 12px 2px 0; color: #333300; }
.note-panel { left: 768px; top: 33px; width: 149px; height: 152px; background: #fff; }
.note-panel h3 { background: #ccc; box-shadow: 0 1px 4px rgba(0, 0, 0, .4); }
.note-panel p, .id-panel p { padding: 0 9px 3px 3px; text-align: center; }
.id-panel { left: 930px; top: 80px; width: 149px; height: 62px; }
.error-panel { left: 266px; top: 465px; width: 409px; height: 134px; }
.path { height: 17px; padding: 0 12px 0 0; background: #d6d04e; font: 10px/14px "Liberation Mono", monospace; text-align: right; }
.rows { flex: 1; margin-left: 12px; border-left: 1px solid #dcd64e; }
.hatch-panel { left: 795px; top: 356px; width: 149px; height: 58px; background: repeating-linear-gradient(45deg, #fff85a 0 4px, #85856c 4px 7px); }

.palette { position: absolute; left: 0; bottom: 0; display: flex; align-items: center; gap: 5px; width: 94px; height: 42px; padding-left: 3px; border: 1px solid #000; border-left: 0; background: linear-gradient(#ececec, #a0a0a0); }
.palette::after { content: ""; align-self: stretch; flex: 1; background: linear-gradient(#bbb 38%, #808080 38%); }
.palette svg { display: block; width: 36px; height: 36px; }
.compass { position: absolute; right: 12px; bottom: 11px; width: 76px; height: 66px; }

.statusbar { display: flex; align-items: center; height: 34px; flex: none; padding: 0 3px 0 5px; border-top: 2px solid #fff; gap: 5px; }
.version { margin-left: auto; margin-right: 34px; color: #777; }
.statusbar svg:last-child { align-self: flex-end; }
```
FILE: grid.js
```js
// Ground plane: two families of lines, each meeting at its own vanishing point.
(function () {
  var layer = document.getElementById("grid");
  var families = [
    { x: -4010, y: 612, origin: 14.96, step: 0.365, dir: 1 },
    { x: 1672, y: 633, origin: 5.95, step: 0.143, dir: -1 }
  ];
  families.forEach(function (f) {
    for (var i = -60; i < 340; i++) {
      var inv = f.origin + i * f.step;
      if (Math.abs(inv) < 0.05) continue;
      var line = document.createElementNS("http://www.w3.org/2000/svg", "line");
      var reach = 9000;
      line.setAttribute("x1", f.x);
      line.setAttribute("y1", f.y);
      line.setAttribute("x2", f.x + f.dir * reach * (inv < 0 ? -1 : 1));
      line.setAttribute("y2", f.y + reach / Math.abs(inv));
      line.setAttribute("class", i % 10 === 0 ? "major" : "minor");
      layer.appendChild(line);
    }
  });
})();
```
